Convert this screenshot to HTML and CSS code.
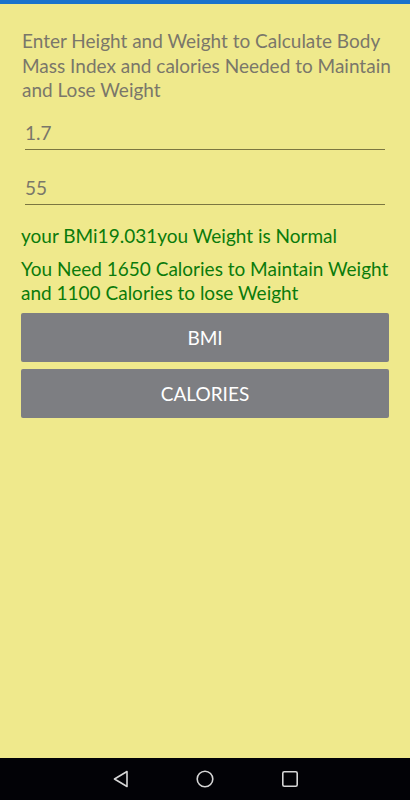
FILE: index.html
```html
<!DOCTYPE html>
<html lang="en">
<head>
    <meta charset="UTF-8">
    <meta name="viewport" content="width=device-width, initial-scale=1.0">
    <title>BMI Calculator</title>
    <link rel="stylesheet" href="styles.css">
</head>
<body>
    <div class="screen">
        <div class="status-bar"></div>

        <main class="content">
            <p class="intro">Enter Height and Weight to Calculate Body Mass Index and calories Needed to Maintain and Lose Weight</p>

            <input class="field" type="text" id="height" value="1.7">
            <input class="field field-second" type="text" id="weight" value="55">

            <p class="result result-bmi">your BMi19.031you Weight is Normal</p>
            <p class="result result-cal">You Need 1650 Calories to Maintain Weight and 1100 Calories to lose Weight</p>

            <button class="action" type="button">BMI</button>
            <button class="action action-second" type="button">CALORIES</button>
        </main>

        <nav class="nav-bar">
            <svg class="nav-icon" width="18" height="18" viewBox="0 0 18 18">
                <path d="M15 1.5 L2.5 9 L15 16.5 Z" fill="none" stroke="#d6d6d6" stroke-width="1.6" stroke-linejoin="round"/>
            </svg>
            <svg class="nav-icon" width="18" height="18" viewBox="0 0 18 18">
                <circle cx="9" cy="9" r="7.8" fill="none" stroke="#d6d6d6" stroke-width="1.6"/>
            </svg>
            <svg class="nav-icon" width="18" height="18" viewBox="0 0 18 18">
                <rect x="1.8" y="1.8" width="14.4" height="14.4" rx="1.5" fill="none" stroke="#d6d6d6" stroke-width="1.6"/>
            </svg>
        </nav>
    </div>
</body>
</html>
```

FILE: styles.css
```css
* {
    box-sizing: border-box;
}

body {
    margin: 0;
    font-family: Lato, "Open Sans", sans-serif;
    background-color: #000;
}

.screen {
    width: 410px;
    height: 800px;
    display: flex;
    flex-direction: column;
}

.status-bar {
    height: 4px;
    background-color: #1a73cc;
}

.content {
    flex: 1;
    background-color: #efe98c;
    padding: 25px 21px 0 21px;
    display: flex;
    flex-direction: column;
}

.intro {
    margin: 0 -8px 0 1px;
    color: #7a776a;
    font-size: 19px;
    line-height: 24.5px;
}

.field {
    display: block;
    margin: 14px 4px 0 4px;
    height: 33px;
    padding: 0;
    border: none;
    border-bottom: 1.5px solid #7b7641;
    background: transparent;
    color: #7a776a;
    font-family: inherit;
    font-size: 19px;
    outline: none;
}

.field-second {
    margin-top: 22px;
}

.result {
    margin: 0;
    color: #0b7b0b;
    font-size: 19px;
    line-height: 24px;
}

.result-bmi {
    margin-top: 19px;
}

.result-cal {
    margin-top: 9px;
}

.action {
    display: block;
    width: 100%;
    height: 49px;
    margin-top: 8px;
    border: none;
    border-radius: 2px;
    background-color: #7d7e82;
    color: #fff;
    font-family: inherit;
    font-size: 19px;
}

.action-second {
    margin-top: 7px;
}

.nav-bar {
    height: 42px;
    background-color: #020206;
    display: flex;
    align-items: center;
    justify-content: center;
    gap: 66.5px;
}
```
